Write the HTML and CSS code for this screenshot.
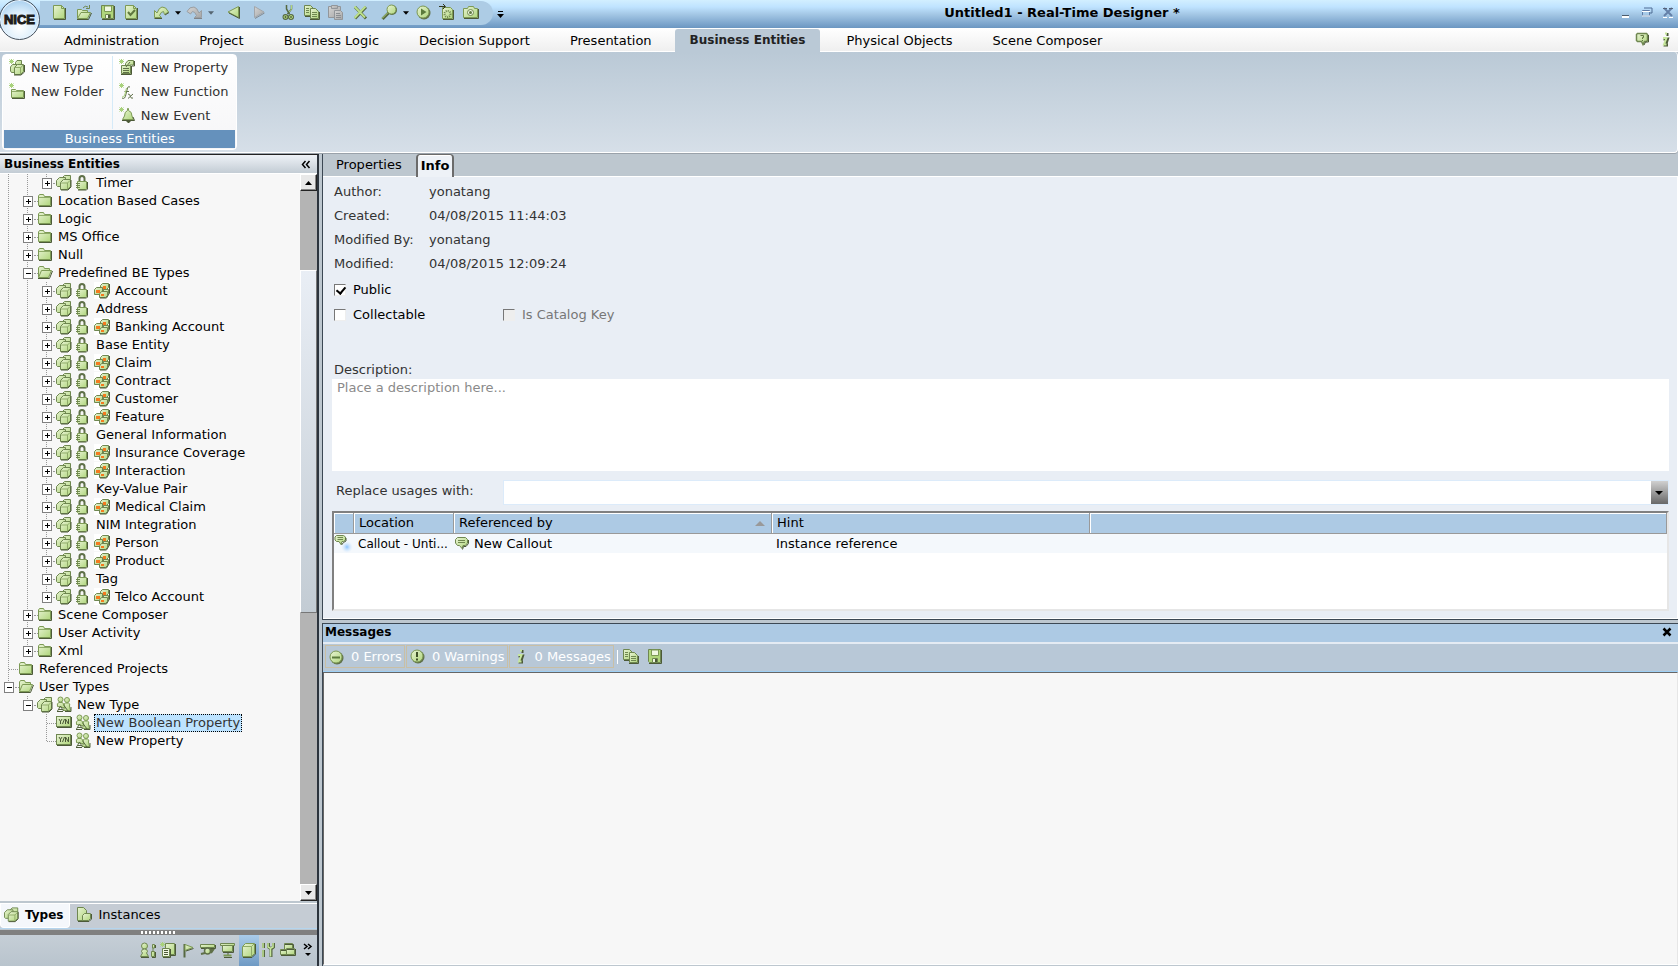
FILE: index.html
```
<!DOCTYPE html>
<html lang="en">
<head>
<meta charset="utf-8">
<title>Untitled1 - Real-Time Designer *</title>
<link rel="stylesheet" href="styles.css">
</head>
<body>
<svg class="defs" width="0" height="0" aria-hidden="true">
  <defs>
    <linearGradient id="gr" x1="0" y1="0" x2="1" y2="1"><stop offset="0" stop-color="#e8f3d4"/><stop offset="1" stop-color="#b0d67c"/></linearGradient>
    <linearGradient id="gy" x1="0" y1="0" x2="1" y2="1"><stop offset="0" stop-color="#d4d4d4"/><stop offset="1" stop-color="#a6a6a6"/></linearGradient>
    <radialGradient id="glow"><stop offset="0" stop-color="#8cc4ff"/><stop offset="1" stop-color="#d8ebff" stop-opacity="0"/></radialGradient>
  </defs>
  <symbol id="i-cubes" viewBox="0 0 19 18"><g fill="url(#gr)" stroke="#6f8750" stroke-linejoin="round"><path d="M5.500 4.500L8.500 1.500H14.500V7.500L11.500 10.500H5.500Z"/><path d="M.5 6.500L3.500 3.500H9.500V10L6.500 12.500H1.500L.5 11.500Z"/><path d="M4.500 8.500L7.500 5.500H14.500V12.500L11.500 15.500H4.500Z"/></g><path d="M5 9H11.500V15M11.500 9L14 6.500" fill="none" stroke="#8fab68"/><path d="M5 16H12L15 13V6" fill="none" stroke="#4c5a38"/></symbol>
  <symbol id="i-lock" viewBox="0 0 19 18"><path d="M4.500 8V4.500Q4.500 2 7 2T9.500 4.500V8" fill="none" stroke="#5f7048" stroke-width="2"/><path d="M2.500 7.500H11.500V14.500L10.500 15.500H3.500L2.500 14.500Z" fill="url(#gr)" stroke="#7d9a55"/><path d="M1 9.500H5M1 11.500H5M1 13.500H5" stroke="#6f8750"/><path d="M3 16H11.500L12.500 15V8" fill="none" stroke="#4c5a38"/></symbol>
  <symbol id="i-cat" viewBox="0 0 19 18"><rect width="16" height="17" fill="#fff"/><g fill="url(#gr)" stroke="#6f8750"><path d="M6.500 3.500L8.500 1.500H14.500V5.500L12.500 7.500H6.500Z"/><path d="M9.500 7.500H14.500V11.500L13 12.500H9.500Z"/><path d="M.5 7.500L2.500 5.500H8.500V10.500L7.500 12.500H.5Z"/><path d="M5.500 12L7.500 9.500H13.500V13.500L11.500 15.500H5.500Z"/></g><path d="M9 4h3v3H9zM2 8h4v3H2zM7 12h3v2H7z" fill="#f47a1e"/><path d="M15.500 2V11L12.500 16H6" fill="none" stroke="#4c5a38"/></symbol>
  <symbol id="i-folder" viewBox="0 0 19 18"><path d="M1.500 13.500V4L2.500 2.500H6.500L7.500 4.500H13.500V13.500Z" fill="url(#gr)" stroke="#7d9a55"/><path d="M2 5.500H13" stroke="#8fab68"/><path d="M2 14.500H14.500V5" fill="none" stroke="#4c5a38"/></symbol>
  <symbol id="i-open" viewBox="0 0 19 18"><path d="M1.500 13V4L2.500 2.500H6.500L7.500 4.500H12.500V7" fill="url(#gr)" stroke="#7d9a55"/><path d="M1.500 13.500L4.500 6.500H14.500L11.500 13.500Z" fill="url(#gr)" stroke="#7d9a55"/><path d="M1 14.500H12.500L15.500 7" fill="none" stroke="#4c5a38"/></symbol>
  <symbol id="i-users" viewBox="0 0 19 18"><g fill="url(#gr)" stroke="#7d9a55"><circle cx="11" cy="4" r="2.500"/><path d="M7.500 14.500L8.500 10Q7.500 7 9.500 7H12.500Q14.500 7.500 13.500 10L14.500 14.500Z"/><circle cx="4.500" cy="3.500" r="2.500"/><path d="M1.500 10.500Q.5 7 3 6.500H6Q8 7 7.500 9L9.500 12Z"/></g><path d="M1.500 15L4.500 10L7.500 15M2.500 13.500H6.500M8 9.500L12 15M15 15.500V11" fill="none" stroke="#566841"/><path d="M1 15.500H7M9 15.500H15" stroke="#4c5a38"/></symbol>
  <symbol id="i-yn" viewBox="0 0 19 18"><rect x=".5" y="2.500" width="14" height="10" fill="url(#gr)" stroke="#6f8750"/><path d="M1 13.500H15.500V3" fill="none" stroke="#4c5a38"/><path d="M3 5L4.500 7.500L6 5M4.500 7V10M8.500 5L6.500 10M9.500 10V5L12.500 10V5" fill="none" stroke="#4c5a38"/></symbol>
  <symbol id="i-spark" viewBox="0 0 18 18"><path d="M2.500 0V5M0 2.500H5M.5 .5L4.500 4.500M4.500 .5L.5 4.500" stroke="#a9d27c"/></symbol>
  <symbol id="i-newtype" viewBox="0 0 18 18"><g fill="url(#gr)" stroke="#6f8750"><path d="M6.500 3.500L8 1.500H12.500V6H6.500Z"/><path d="M1.500 8L3.500 5.500H8V13.500H2.500L1.500 12Z"/><path d="M5.500 8.500L8.500 5.500H14.500V12.500L11.500 15.500H5.500Z"/></g><path d="M6 8.500H11.500V15M11.500 9L14 6" fill="none" stroke="#8fab68"/><path d="M5 16H12L15.500 13V6" fill="none" stroke="#4c5a38"/><use href="#i-spark"/></symbol>
  <symbol id="i-newfolder" viewBox="0 0 18 18"><path d="M2.500 14.500V6.500H6.500L7.500 7.500H14.500V14.500Z" fill="url(#gr)" stroke="#7d9a55"/><path d="M3 8.500H14" stroke="#8fab68"/><path d="M3 15.500H15.500V8" fill="none" stroke="#4c5a38"/><use href="#i-spark"/></symbol>
  <symbol id="i-prop" viewBox="0 0 18 18"><path d="M6.500 4.500L9 1.500H14.500V6H11L6.500 9Z" fill="url(#gr)" stroke="#6f8750"/><path d="M2.500 6.500H11.500V14.500H2.500Z" fill="url(#gr)" stroke="#6f8750"/><path d="M4 9.500H10M4 11.500H10M4 13.500H10M7 8L11 3" stroke="#5f7048"/><path d="M2 15.500H12.500V7M15.500 2V7H13" fill="none" stroke="#4c5a38"/><use href="#i-spark"/></symbol>
  <symbol id="i-func" viewBox="0 0 18 18"><path d="M3 15Q6 17 7 11L8.500 5Q9 3 11 4M5.500 8.500H10M9 11Q11 11 11.500 13.500T14 15M14 11L9 15.500" fill="none" stroke="#5f7048"/><path d="M3 14Q5 15 6 11L7.500 5" fill="none" stroke="#a9cf7b"/><use href="#i-spark"/></symbol>
  <symbol id="i-bell" viewBox="0 0 18 18"><path d="M8.500 1.500H9.500V3.500Q13 4.500 13 9L14.500 12.500H3.500L5.500 9Q5.500 4.500 8.500 3.500Z" fill="url(#gr)" stroke="#7d9a55"/><path d="M3 13.500H15.500L14 10M7.500 14.500H11.500M8.500 15.500H10.500" fill="none" stroke="#4c5a38"/><use href="#i-spark"/></symbol>
  <symbol id="i-doc" viewBox="0 0 18 18"><path d="M1.500 1.500H9.500L12.500 4.500V14.500H1.500Z" fill="url(#gr)" stroke="#7d9a55"/><path d="M9.500 1.500V4.500H12.500" fill="none" stroke="#7d9a55"/><path d="M2 15.500H13.500V4" fill="none" stroke="#4c5a38"/></symbol>
  <symbol id="i-openfile" viewBox="0 0 18 18"><path d="M1.500 14V5.500H5.500L6.500 6.500H11.500V8.500" fill="url(#gr)" stroke="#7d9a55"/><path d="M1.500 14.500L5 8.500H14.500L11.500 14.500Z" fill="url(#gr)" stroke="#7d9a55"/><path d="M1 15.500H12.500L15.500 9" fill="none" stroke="#4c5a38"/><path d="M7 4Q9 1 12 3M13.500 1V4.500H10" fill="none" stroke="#6f8750"/></symbol>
  <symbol id="i-save" viewBox="0 0 18 18"><path d="M1.500 1.500H13.500V14.500H2.500L1.500 13.500Z" fill="#b0d67c" stroke="#6f8750"/><path d="M4.500 2H11.500V7.500H4.500Z" fill="#f0f8e2" stroke="#7d9a55"/><path d="M5.500 10.500H10.500V14.500H5.500Z" fill="#f0f8e2" stroke="#6f8750"/><path d="M8 11h2v3H8z" fill="#4c5a38"/><path d="M2 15.500H14.500V2" fill="none" stroke="#4c5a38"/></symbol>
  <symbol id="i-check" viewBox="0 0 18 18"><use href="#i-doc"/><path d="M4 8L6.500 11L11 6" fill="none" stroke="#5f7840" stroke-width="2"/></symbol>
  <symbol id="i-undo" viewBox="0 0 18 18"><path d="M1.500 6.500V13.500H8.500L6.500 11.500Q8 7.500 10.500 7.500L11.500 10.500L15.500 8Q13 2.500 9 3Q6 3.500 4 9Z" fill="url(#gr)" stroke="#7d9a55" stroke-linejoin="round"/><path d="M1.500 14.500H9M12 11L16 8.500" stroke="#4c5a38"/></symbol>
  <symbol id="i-redo" viewBox="0 0 18 18"><path d="M15.500 6.500V13.500H8.500L10.500 11.500Q9 7.500 6.500 7.500L4.500 10L1 7.500Q3.500 2.500 8 3Q11 3.500 13 9Z" fill="url(#gy)" stroke="#9a9ea2" stroke-linejoin="round"/><path d="M8 14.500H16" stroke="#808488"/></symbol>
  <symbol id="i-back" viewBox="0 0 18 18"><path d="M12.500 2.500V13.500L2 8Z" fill="url(#gr)" stroke="#7d9a55" stroke-linejoin="round"/><path d="M3 9L13.500 14.500V3" fill="none" stroke="#4c5a38"/></symbol>
  <symbol id="i-fwd" viewBox="0 0 18 18"><path d="M4.500 2.500V13.500L14 8Z" fill="url(#gy)" stroke="#a2a6aa" stroke-linejoin="round"/><path d="M5 14.500L14.500 9" stroke="#83898f"/></symbol>
  <symbol id="i-cut" viewBox="0 0 18 18"><path d="M11.500 1V5L7.500 10M6.500 1V5L9.500 10" fill="none" stroke="#566841" stroke-width="1.500"/><g fill="none" stroke="#566841" stroke-width="3"><circle cx="5.500" cy="13" r="1.500"/><circle cx="11" cy="13" r="1.500"/></g><g fill="none" stroke="#b0d67c"><circle cx="5.500" cy="13" r="1.500"/><circle cx="11" cy="13" r="1.500"/><path d="M11.500 1V5L9 8"/></g></symbol>
  <symbol id="i-copy" viewBox="0 0 18 18"><g fill="url(#gr)" stroke="#6f8750"><path d="M.5 1.500H6.500L9.500 4.500V11.500H.5Z"/><path d="M6.500 4.500H11.500L14.500 7.500V14.500H6.500Z"/></g><path d="M2 4.500H5M2 6.500H5M2 8.500H5M8 8.500H13M8 10.500H13M8 12.500H13" stroke="#6f8750"/><path d="M6 15.500H15.500V8M1 12.500H6" fill="none" stroke="#4c5a38"/></symbol>
  <symbol id="i-paste" viewBox="0 0 18 18"><g fill="url(#gy)" stroke="#92969a"><path d="M.5 2.500H12.500V13.500H.5Z"/><path d="M3.500 1.500H9.500V4.500H3.500Z"/><path d="M6.500 6.500H12.500L14.500 8.500V15.500H6.500Z"/></g><path d="M8 9.500H12M8 11.500H13M8 13.500H13" stroke="#8a8e92"/></symbol>
  <symbol id="i-del" viewBox="0 0 18 18"><path d="M3 3L14 14.500M14 3L3 14.500" stroke="#566841" stroke-width="3"/><path d="M2.500 2.500L13 13.500M13.500 2.500L2.500 14" stroke="#bbdf8a" stroke-width="2"/></symbol>
  <symbol id="i-find" viewBox="0 0 18 18"><path d="M1.500 15L8 8.500" stroke="#566841" stroke-width="3"/><path d="M1 14.500L7 8.500" stroke="#b0d67c"/><circle cx="11" cy="6" r="5" fill="#566841"/><circle cx="10.500" cy="5.500" r="4.500" fill="url(#gr)" stroke="#7d9a55"/></symbol>
  <symbol id="i-run" viewBox="0 0 18 18"><circle cx="9" cy="9" r="6.500" fill="#5f7048"/><circle cx="8" cy="8" r="6" fill="url(#gr)" stroke="#7d9a55"/><path d="M6 4.500L11.500 8L6 11.500Z" fill="#5b7a3c"/></symbol>
  <symbol id="i-gear" viewBox="0 0 18 18"><path d="M3.500 3.500H11.500L13.500 5.500V14.500H3.500Z" fill="url(#gr)" stroke="#7d9a55"/><path d="M4 15.500H14.500V6" fill="none" stroke="#4c5a38"/><circle cx="8.500" cy="10" r="3" fill="none" stroke="#6f8750" stroke-width="2" stroke-dasharray="1 1"/><path d="M0 2.500H6M4 0L6.500 2.500L4 5" fill="none" stroke="#303820"/></symbol>
  <symbol id="i-cam" viewBox="0 0 18 18"><path d="M.5 4.500H4.500L5.500 2.500H10.500L11.500 4.500H14.500V13.500H.5Z" fill="url(#gr)" stroke="#7d9a55"/><circle cx="7.500" cy="8.500" r="3" fill="#f0f8e2" stroke="#6f8750"/><circle cx="7.500" cy="8.500" r="1.500" fill="#5f7840"/><path d="M1 14.500H15.500V5" fill="none" stroke="#4c5a38"/></symbol>
  <symbol id="i-help" viewBox="0 0 18 18"><path d="M3.500 2.500H12.500L13.500 3.500V9.500L12.500 10.500H10.500L9 13.500L7.500 10.500H3.500L2.500 9.500V3.500Z" fill="url(#gr)" stroke="#6f8750" stroke-width="1.500"/><path d="M14.500 4V11H11.500L10 14" fill="none" stroke="#4c5a38"/><path d="M6.500 4.500H9.500V6.500H8.500V8M8.500 9V10" fill="none" stroke="#5f7840"/></symbol>
  <symbol id="i-info" viewBox="0 0 18 18"><path d="M9.500 3.500H11.500M6.500 8H10.500L8.500 14H11" fill="none" stroke="#4c5a38" stroke-width="3"/><path d="M8 2.500H10M6 7H9.500L7 13.500H9.500" fill="none" stroke="#c6e69c" stroke-width="2"/></symbol>
  <symbol id="i-err" viewBox="0 0 18 18"><circle cx="9" cy="10" r="6.500" fill="#5f7048"/><circle cx="8" cy="9" r="6" fill="url(#gr)" stroke="#7d9a55"/><path d="M4 9.500H12" stroke="#5b7a3c" stroke-width="2"/></symbol>
  <symbol id="i-warn" viewBox="0 0 18 18"><circle cx="9" cy="9" r="6.500" fill="#5f7048"/><circle cx="8" cy="8" r="6" fill="url(#gr)" stroke="#7d9a55"/><path d="M8 4V9M8 10.500V12.500" stroke="#3f5028" stroke-width="2"/></symbol>
  <symbol id="i-callout" viewBox="0 0 18 18"><path d="M3.500 2.500H11.500L13.500 4.500V8L11.500 10.500H9L8 13.500L5.500 10.500H3.500L1.500 8V4.500Z" fill="url(#gr)" stroke="#6f8750"/><path d="M14.500 5V8.500L12 11.500H9.500L8.500 14.500" fill="none" stroke="#4c5a38"/><path d="M4 5.500H11M4 7.500H11" stroke="#6f8750"/></symbol>
  <symbol id="i-callout2" viewBox="0 0 19 19"><circle cx="13" cy="13" r="6" fill="url(#glow)"/><path d="M2.500 1.500H9.500L11.500 3V6L9.500 7.500H8L7 10.500L5 7.500H2.500L1 6V3Z" fill="url(#gr)" stroke="#6f8750"/><path d="M3.500 3.500H9M3.500 5.500H9" stroke="#6f8750"/><path d="M12 4V7L9.500 8.500L7.500 11" fill="none" stroke="#4c5a38"/></symbol>
  <symbol id="i-inst" viewBox="0 0 18 18"><path d="M1.500 1.500H7.500L10.500 4.500V14.500H1.500Z" fill="url(#gr)" stroke="#6f8750"/><path d="M6.500 9.500L8.500 7.500H14.500V12.500L12.500 14.500H6.500Z" fill="url(#gr)" stroke="#6f8750"/><path d="M2 15.500H13L15.500 13V8" fill="none" stroke="#4c5a38"/></symbol>
  <symbol id="i-n1" viewBox="0 0 18 18"><g fill="url(#gr)" stroke="#6f8750"><circle cx="4.500" cy="4" r="3"/><path d="M1.500 9.500Q1.500 7 4.500 7T7.500 9.500L6.500 11L8.500 14.500H.5L2.500 11Z"/><path d="M12.500 2.500H14.500V6H12.500ZM11.500 9.500H14.500V14.500H11.500ZM13 6V9"/></g><path d="M1 15.500H9M12 15.500H15.500V10M15.500 3V6" fill="none" stroke="#4c5a38"/></symbol>
  <symbol id="i-n2" viewBox="0 0 18 18"><path d="M5.500 1.500H14.500V12.500H5.500Z" fill="url(#gr)" stroke="#6f8750"/><path d="M11 13.500H15.500V2" fill="none" stroke="#4c5a38"/><path d="M2.500 6.500H9.500V14.500H2.500Z" fill="#f0f8e2" stroke="#6f8750"/><path d="M3 15.500H10.500V7M4 8.500H8M4 10.500H8M4 12.500H8" fill="none" stroke="#4c5a38"/><use href="#i-spark"/></symbol>
  <symbol id="i-n3" viewBox="0 0 18 18"><path d="M4.500 2V15.500" stroke="#566841" stroke-width="2"/><path d="M5 2.500L13 5.500L5 8.500Z" fill="url(#gr)" stroke="#7d9a55"/><path d="M6 9L13.500 6.500" stroke="#4c5a38"/></symbol>
  <symbol id="i-n4" viewBox="0 0 18 18"><path d="M.5 2.500H14.500V5.500H.5Z" fill="url(#gr)" stroke="#6f8750"/><path d="M1 6.500H15.500V3" fill="none" stroke="#4c5a38"/><path d="M10 8H13L11 11M5 11L1 12" fill="none" stroke="#5f7048" stroke-width="2"/><circle cx="7.500" cy="9" r="3" fill="url(#gr)" stroke="#5f7048" stroke-width="1.500"/></symbol>
  <symbol id="i-n5" viewBox="0 0 18 18"><path d="M.5 1.500H14.500V3.500H.5Z" fill="url(#gr)" stroke="#6f8750"/><path d="M2.500 3.500H12.500V9.500H2.500Z" fill="url(#gr)" stroke="#6f8750"/><path d="M3 10.500H13.500V4M8 11V13M4 15.500H12" fill="none" stroke="#4c5a38"/><path d="M3.500 13.500H11.500" stroke="#7d9a55" stroke-width="2"/></symbol>
  <symbol id="i-n6" viewBox="0 0 18 18"><path d="M2.500 4.500L5.500 1.500H14.500V11.500L11.500 14.500H2.500Z" fill="url(#gr)" stroke="#7d9a55"/><path d="M3 4.500H11.500V14M11.500 4.500L14 2" fill="none" stroke="#8fab68"/><path d="M3 15.500H12L15.500 12V2" fill="none" stroke="#4c5a38"/></symbol>
  <symbol id="i-n7" viewBox="0 0 18 18"><path d="M3.500 1V6M3.500 8V15" stroke="#566841" stroke-width="3"/><path d="M3 1V6M3 8V15" stroke="#c6e69c" stroke-width="1.500"/><path d="M8.500 1V5L11 7L13.500 5V1M11 6V15" fill="none" stroke="#566841" stroke-width="3"/><path d="M8 1V5L10.500 6.500L13 5V1M10.500 6V14.500" fill="none" stroke="#c6e69c" stroke-width="1.500"/></symbol>
  <symbol id="i-n8" viewBox="0 0 18 18"><g fill="url(#gr)" stroke="#6f8750"><path d="M4.500 1.500H12.500V7.500H4.500Z"/><path d="M.5 7.500H8.500V12.500H.5Z"/><path d="M6.500 6.500H14.500V12.500H6.500Z"/></g><path d="M5 2.500H13.500V6M1 13.500H15.500V7M7 7.500H14M1 8.500H6" fill="none" stroke="#4c5a38"/></symbol>
  <symbol id="i-more" viewBox="0 0 10 18"><path d="M1 2L4 4.500L1 7M5 2L8 4.500L5 7" fill="none" stroke="#000" stroke-width="1.500"/><path d="M2 11H8L5 14Z"/></symbol>
  <symbol id="i-down" viewBox="0 0 7 4"><path d="M0 0H7L3.500 4Z"/></symbol>
</svg>

<header class="top">
  <div class="titlebar">
    <div class="logo" aria-hidden="true"><span>NICE</span></div>
    <div class="quick" role="toolbar" aria-label="Quick access">
      <button aria-label="New"><svg><use href="#i-doc"/></svg></button>
      <button aria-label="Open"><svg><use href="#i-openfile"/></svg></button>
      <button aria-label="Save"><svg><use href="#i-save"/></svg></button>
      <button aria-label="Validate"><svg><use href="#i-check"/></svg></button>
      <button class="drop" aria-label="Undo"><svg><use href="#i-undo"/></svg><svg class="caret"><use href="#i-down"/></svg></button>
      <button class="drop off" aria-label="Redo"><svg><use href="#i-redo"/></svg><svg class="caret"><use href="#i-down"/></svg></button>
      <button class="nav" aria-label="Back"><svg><use href="#i-back"/></svg></button>
      <button aria-label="Forward"><svg><use href="#i-fwd"/></svg></button>
      <button class="nav" aria-label="Cut"><svg><use href="#i-cut"/></svg></button>
      <button aria-label="Copy"><svg><use href="#i-copy"/></svg></button>
      <button aria-label="Paste"><svg><use href="#i-paste"/></svg></button>
      <button aria-label="Delete"><svg><use href="#i-del"/></svg></button>
      <button class="drop" aria-label="Find"><svg><use href="#i-find"/></svg><svg class="caret"><use href="#i-down"/></svg></button>
      <button aria-label="Run"><svg><use href="#i-run"/></svg></button>
      <button aria-label="Generate"><svg><use href="#i-gear"/></svg></button>
      <button aria-label="Capture"><svg><use href="#i-cam"/></svg></button>
    </div>
    <button class="customize" aria-label="Customize"><svg viewBox="0 0 7 8"><path d="M1 1.500H6" stroke="#000"/><path d="M0 4H7L3.500 8Z"/></svg></button>
    <h1>Untitled1 - Real-Time Designer *</h1>
    <div class="win">
      <button aria-label="Minimize"><svg viewBox="0 0 12 12"><path d="M2 8.500H9" stroke="#4d5c6c"/><path d="M2 10H9" stroke="#fff" stroke-width="2"/></svg></button>
      <button aria-label="Restore"><svg viewBox="0 0 12 12"><path d="M3 1H11V6H9" fill="none" stroke="#4f6c94"/><path d="M1.500 3.500H8.500V9H1.500Z" fill="none" stroke="#5f7ba5"/><path d="M1 4.500H9M1 9H9" stroke="#fff"/></svg></button>
      <button aria-label="Close"><svg viewBox="0 0 12 12"><path d="M2 1L10 9M10 1L2 9" stroke="#6480a8" stroke-width="2"/><path d="M1 1.500H5M7 1.500H11" stroke="#56647a"/><path d="M1 10.500H5M7 10.500H11" stroke="#fff"/></svg></button>
    </div>
  </div>
  <nav class="menu">
    <a href="#">Administration</a><a href="#">Project</a><a href="#">Business Logic</a><a href="#">Decision Support</a><a href="#">Presentation</a><a href="#" class="on">Business Entities</a><a href="#">Physical Objects</a><a href="#">Scene Composer</a>
    <div class="menu-right">
      <button aria-label="Help"><svg><use href="#i-help"/></svg></button>
      <button aria-label="About"><svg><use href="#i-info"/></svg></button>
    </div>
  </nav>
  <div class="ribbon">
    <section class="group">
      <div class="group-body">
        <div class="col">
          <button><svg><use href="#i-newtype"/></svg>New Type</button>
          <button><svg><use href="#i-newfolder"/></svg>New Folder</button>
        </div>
        <div class="col">
          <button><svg><use href="#i-prop"/></svg>New Property</button>
          <button><svg><use href="#i-func"/></svg>New Function</button>
          <button><svg><use href="#i-bell"/></svg>New Event</button>
        </div>
      </div>
      <h2>Business Entities</h2>
    </section>
  </div>
</header>

<main class="work">
  <aside class="side">
    <div class="side-head"><h2>Business Entities</h2><button aria-label="Collapse"><svg viewBox="0 0 10 9"><path d="M4.500 1L1.500 4.500L4.500 8M8.500 1L5.500 4.500L8.500 8" fill="none" stroke="#000" stroke-width="1.500"/></svg></button></div>
    <div class="tree-wrap">
      <ul class="tree">
        <li><i class="v"></i><i class="v"></i><i class="t last"></i><span class="n"><svg><use href="#i-cubes"/></svg><svg><use href="#i-lock"/></svg><b>Timer</b></span></li>
        <li><i class="v"></i><i class="t"></i><span class="n"><svg><use href="#i-folder"/></svg><b>Location Based Cases</b></span></li>
        <li><i class="v"></i><i class="t"></i><span class="n"><svg><use href="#i-folder"/></svg><b>Logic</b></span></li>
        <li><i class="v"></i><i class="t"></i><span class="n"><svg><use href="#i-folder"/></svg><b>MS Office</b></span></li>
        <li><i class="v"></i><i class="t"></i><span class="n"><svg><use href="#i-folder"/></svg><b>Null</b></span></li>
        <li><i class="v"></i><i class="t minus"></i><span class="n"><svg><use href="#i-open"/></svg><b>Predefined BE Types</b></span></li>
        <li><i class="v"></i><i class="v"></i><i class="t"></i><span class="n"><svg><use href="#i-cubes"/></svg><svg><use href="#i-lock"/></svg><svg><use href="#i-cat"/></svg><b>Account</b></span></li>
        <li><i class="v"></i><i class="v"></i><i class="t"></i><span class="n"><svg><use href="#i-cubes"/></svg><svg><use href="#i-lock"/></svg><b>Address</b></span></li>
        <li><i class="v"></i><i class="v"></i><i class="t"></i><span class="n"><svg><use href="#i-cubes"/></svg><svg><use href="#i-lock"/></svg><svg><use href="#i-cat"/></svg><b>Banking Account</b></span></li>
        <li><i class="v"></i><i class="v"></i><i class="t"></i><span class="n"><svg><use href="#i-cubes"/></svg><svg><use href="#i-lock"/></svg><b>Base Entity</b></span></li>
        <li><i class="v"></i><i class="v"></i><i class="t"></i><span class="n"><svg><use href="#i-cubes"/></svg><svg><use href="#i-lock"/></svg><svg><use href="#i-cat"/></svg><b>Claim</b></span></li>
        <li><i class="v"></i><i class="v"></i><i class="t"></i><span class="n"><svg><use href="#i-cubes"/></svg><svg><use href="#i-lock"/></svg><svg><use href="#i-cat"/></svg><b>Contract</b></span></li>
        <li><i class="v"></i><i class="v"></i><i class="t"></i><span class="n"><svg><use href="#i-cubes"/></svg><svg><use href="#i-lock"/></svg><svg><use href="#i-cat"/></svg><b>Customer</b></span></li>
        <li><i class="v"></i><i class="v"></i><i class="t"></i><span class="n"><svg><use href="#i-cubes"/></svg><svg><use href="#i-lock"/></svg><svg><use href="#i-cat"/></svg><b>Feature</b></span></li>
        <li><i class="v"></i><i class="v"></i><i class="t"></i><span class="n"><svg><use href="#i-cubes"/></svg><svg><use href="#i-lock"/></svg><b>General Information</b></span></li>
        <li><i class="v"></i><i class="v"></i><i class="t"></i><span class="n"><svg><use href="#i-cubes"/></svg><svg><use href="#i-lock"/></svg><svg><use href="#i-cat"/></svg><b>Insurance Coverage</b></span></li>
        <li><i class="v"></i><i class="v"></i><i class="t"></i><span class="n"><svg><use href="#i-cubes"/></svg><svg><use href="#i-lock"/></svg><svg><use href="#i-cat"/></svg><b>Interaction</b></span></li>
        <li><i class="v"></i><i class="v"></i><i class="t"></i><span class="n"><svg><use href="#i-cubes"/></svg><svg><use href="#i-lock"/></svg><b>Key-Value Pair</b></span></li>
        <li><i class="v"></i><i class="v"></i><i class="t"></i><span class="n"><svg><use href="#i-cubes"/></svg><svg><use href="#i-lock"/></svg><svg><use href="#i-cat"/></svg><b>Medical Claim</b></span></li>
        <li><i class="v"></i><i class="v"></i><i class="t"></i><span class="n"><svg><use href="#i-cubes"/></svg><svg><use href="#i-lock"/></svg><b>NIM Integration</b></span></li>
        <li><i class="v"></i><i class="v"></i><i class="t"></i><span class="n"><svg><use href="#i-cubes"/></svg><svg><use href="#i-lock"/></svg><svg><use href="#i-cat"/></svg><b>Person</b></span></li>
        <li><i class="v"></i><i class="v"></i><i class="t"></i><span class="n"><svg><use href="#i-cubes"/></svg><svg><use href="#i-lock"/></svg><svg><use href="#i-cat"/></svg><b>Product</b></span></li>
        <li><i class="v"></i><i class="v"></i><i class="t"></i><span class="n"><svg><use href="#i-cubes"/></svg><svg><use href="#i-lock"/></svg><b>Tag</b></span></li>
        <li><i class="v"></i><i class="v"></i><i class="t last"></i><span class="n"><svg><use href="#i-cubes"/></svg><svg><use href="#i-lock"/></svg><svg><use href="#i-cat"/></svg><b>Telco Account</b></span></li>
        <li><i class="v"></i><i class="t"></i><span class="n"><svg><use href="#i-folder"/></svg><b>Scene Composer</b></span></li>
        <li><i class="v"></i><i class="t"></i><span class="n"><svg><use href="#i-folder"/></svg><b>User Activity</b></span></li>
        <li><i class="v"></i><i class="t last"></i><span class="n"><svg><use href="#i-folder"/></svg><b>Xml</b></span></li>
        <li><i class="v h"></i><span class="n"><svg><use href="#i-folder"/></svg><b>Referenced Projects</b></span></li>
        <li><i class="t minus last"></i><span class="n"><svg><use href="#i-open"/></svg><b>User Types</b></span></li>
        <li><i></i><i class="t minus last"></i><span class="n"><svg><use href="#i-cubes"/></svg><svg><use href="#i-users"/></svg><b>New Type</b></span></li>
        <li><i></i><i></i><i class="v h"></i><span class="n"><svg><use href="#i-yn"/></svg><svg><use href="#i-users"/></svg><b class="sel">New Boolean Property</b></span></li>
        <li><i></i><i></i><i class="v h last"></i><span class="n"><svg><use href="#i-yn"/></svg><svg><use href="#i-users"/></svg><b>New Property</b></span></li>
      </ul>
      <div class="scroll">
        <button aria-label="Scroll up"><svg viewBox="0 0 7 4"><path d="M0 4H7L3.500 0Z"/></svg></button>
        <div class="before"></div>
        <div class="thumb"></div>
        <div class="after"></div>
        <button aria-label="Scroll down"><svg><use href="#i-down"/></svg></button>
      </div>
    </div>
    <div class="side-tabs">
      <button class="on"><svg><use href="#i-cubes"/></svg>Types</button>
      <button><svg><use href="#i-inst"/></svg>Instances</button>
    </div>
    <div class="grip"><span></span></div>
    <div class="side-nav">
      <button aria-label="Users"><svg><use href="#i-n1"/></svg></button>
      <button aria-label="Forms"><svg><use href="#i-n2"/></svg></button>
      <button aria-label="Flags"><svg><use href="#i-n3"/></svg></button>
      <button aria-label="Decisions"><svg><use href="#i-n4"/></svg></button>
      <button aria-label="Presentation"><svg><use href="#i-n5"/></svg></button>
      <button class="on" aria-label="Entities"><svg><use href="#i-n6"/></svg></button>
      <button aria-label="Tools"><svg><use href="#i-n7"/></svg></button>
      <button aria-label="Screens"><svg><use href="#i-n8"/></svg></button>
      <button class="more" aria-label="More"><svg><use href="#i-more"/></svg></button>
    </div>
  </aside>

  <div class="content">
    <section class="editor">
      <div class="tabs"><button>Properties</button><button class="on">Info</button></div>
      <div class="form">
        <dl>
          <dt>Author:</dt><dd>yonatang</dd>
          <dt>Created:</dt><dd>04/08/2015 11:44:03</dd>
          <dt>Modified By:</dt><dd>yonatang</dd>
          <dt>Modified:</dt><dd>04/08/2015 12:09:24</dd>
        </dl>
        <div class="checks">
          <label><input type="checkbox" checked>Public</label>
          <span></span>
          <label><input type="checkbox">Collectable</label>
          <label class="off"><input type="checkbox" disabled>Is Catalog Key</label>
        </div>
        <label class="desc" for="desc">Description:</label>
        <textarea id="desc" placeholder="Place a description here..."></textarea>
        <div class="replace">
          <label for="rep">Replace usages with:</label>
          <div class="combo"><select id="rep"><option></option></select></div>
        </div>
        <div class="grid">
          <table>
            <colgroup><col class="c0"><col class="c1"><col class="c2"><col class="c2"><col></colgroup>
            <thead><tr><th></th><th>Location</th><th class="sort">Referenced by</th><th>Hint</th><th></th></tr></thead>
            <tbody><tr><td><svg><use href="#i-callout2"/></svg></td><td class="loc">Callout - Unti...</td><td class="ref"><svg><use href="#i-callout"/></svg>New Callout</td><td>Instance reference</td><td></td></tr></tbody>
          </table>
        </div>
      </div>
    </section>
    <section class="messages">
      <div class="msg-head"><h2>Messages</h2><button aria-label="Close messages"><svg viewBox="0 0 10 10"><path d="M1.500 1.500L8.500 8.500M8.500 1.500L1.500 8.500" stroke="#000" stroke-width="2.500"/></svg></button></div>
      <div class="msg-bar">
        <button class="flt"><svg><use href="#i-err"/></svg>0 Errors</button>
        <button class="flt"><svg><use href="#i-warn"/></svg>0 Warnings</button>
        <button class="flt"><svg><use href="#i-info"/></svg>0 Messages</button>
        <span class="sep"></span>
        <button aria-label="Copy messages"><svg><use href="#i-copy"/></svg></button>
        <button aria-label="Save messages"><svg><use href="#i-save"/></svg></button>
      </div>
      <div class="msg-list"></div>
    </section>
  </div>
</main>
</body>
</html>
```
FILE: styles.css
```
* { box-sizing: border-box; }
body {
  margin: 0;
  height: 100vh;
  display: flex;
  flex-direction: column;
  overflow: hidden;
  font: 13px/18px "DejaVu Sans", Verdana, sans-serif;
  color: #000;
  background: #bdc7cf;
}
.defs { position: absolute; }
h1, h2, ul, dl, dd { margin: 0; padding: 0; font: inherit; }
h1, h2 { font-weight: bold; }
button { font: inherit; color: inherit; border: 0; padding: 0; background: none; display: flex; align-items: center; }
svg { display: block; flex: none; width: 18px; height: 18px; }
ul { list-style: none; }
b { font-weight: normal; }

/* title bar */
.titlebar {
  position: relative;
  display: flex;
  align-items: center;
  height: 28px;
  padding-left: 40px;
  background: linear-gradient(#d2efff, #bfe3ff 25%, #a5c8e6 50%, #6b96c1);
}
.logo {
  position: absolute;
  left: -1px;
  top: -1px;
  z-index: 2;
  width: 41px;
  height: 41px;
  border: 1px solid #44505c;
  border-radius: 50%;
  display: flex;
  align-items: center;
  justify-content: center;
  background: radial-gradient(circle at 50% 70%, #fff, #dceefb 45%, #8fc0e8);
  box-shadow: inset 0 0 0 1px #e8f4ff;
}
.logo span { font: bold 13px "Liberation Sans", sans-serif; color: #1c1c1c; -webkit-text-stroke: 1px #1c1c1c; }
.quick {
  display: flex;
  align-items: center;
  gap: 6px;
  height: 24px;
  padding: 0 12px;
  margin-bottom: 2px;
  border-radius: 0 12px 12px 0;
  background: #adcce5;
}
.quick .drop { gap: 4px; margin-left: 5px; }
.quick .off { margin-left: -1px; }
.quick .caret { width: 6px; height: 4px; }
.quick .off .caret { opacity: .5; }
.quick .nav { margin-left: 6px; }
.customize { margin-left: 4px; }
.customize svg { width: 7px; height: 8px; }
.titlebar h1 { flex: 1; text-align: center; font-size: 13px; line-height: 24px; padding-bottom: 3px; }
.win { display: flex; gap: 9px; padding-right: 4px; margin-bottom: 2px; }
.win svg { width: 12px; height: 12px; }

/* menu */
.menu {
  display: flex;
  align-items: stretch;
  height: 24px;
  padding: 1px 3px 0 44px;
  background: linear-gradient(#fff, #efefef);
  border-bottom: 1px solid #fff;
}
.menu a { padding: 0 20px; line-height: 23px; color: #000; text-decoration: none; }
.menu a.on { margin: 0 6px 0 3px; padding: 0 15px; height: 24px; font-size: 12px; font-weight: bold; color: #222; border-radius: 3px 3px 0 0; background: #bac9d6; }
.menu-right { margin-left: auto; display: flex; align-items: center; gap: 5px; }

/* ribbon */
.ribbon {
  height: 101px;
  padding: 2px;
  border: solid #fff;
  border-width: 0 1px 1px 0;
  border-radius: 0 4px 4px 0;
  box-shadow: 0 1px 0 #9aa2aa;
  background: linear-gradient(#bac9d6, #d6dfe8);
}
.group {
  display: inline-flex;
  flex-direction: column;
  padding: 0 1px 1px;
  border-radius: 4px;
  border: 1px solid #fff;
  background: linear-gradient(#fff, #f5f5f7);
}
.group-body { display: flex; padding: 1px 7px 1px 5px; height: 75px; }
.col { display: flex; flex-direction: column; color: #333; }
.col + .col { margin-left: 8px; padding-left: 6px; border-left: 1px solid #d5eaf8; }
.col button { flex: none; height: 24px; gap: 4px; white-space: nowrap; }
.group h2 { font-weight: normal; text-align: center; color: #fff; background: #6591bc; }

/* workspace */
.work { flex: 1; min-height: 0; display: flex; gap: 3px; padding-top: 1px; }
.side {
  width: 319px;
  flex: none;
  display: flex;
  flex-direction: column;
  border-top: 1px solid #222;
  border-right: 2px solid #2c343d;
}
.side-head { display: flex; align-items: center; justify-content: space-between; height: 19px; padding: 0 6px 0 4px; background: linear-gradient(#eef2f7, #c3ccd4); border-bottom: 1px solid #fff; }
.side-head h2, .msg-head h2 { font-size: 12px; }
.side-head svg { width: 10px; height: 9px; }
.tree-wrap { flex: 1; min-height: 0; display: flex; background: #f7f7f7; overflow: hidden; }
.tree { flex: 1; overflow: hidden; }
.tree li { display: flex; height: 18px; }
.tree i { flex: none; width: 19px; height: 18px; background-repeat: no-repeat; display: flex; align-items: center; }
.tree .v, .tree .t { background-image: repeating-linear-gradient(#999 0 1px, transparent 1px 2px); background-size: 1px 100%; background-position: 8px 0; }
.tree .last { background-size: 1px 50%; }
.tree .t::before {
  content: "";
  width: 9px;
  height: 9px;
  margin-left: 4px;
  border: 1px solid #808080;
  background: linear-gradient(#000, #000) center / 5px 1px no-repeat, linear-gradient(#000, #000) center / 1px 5px no-repeat, #fff;
}
.tree .minus::before { background: linear-gradient(#000, #000) center / 5px 1px no-repeat, #fff; }
.tree .t::after { content: ""; width: 4px; margin-left: 1px; border-top: 1px dotted #999; }
.tree .h::after { content: ""; width: 9px; margin-left: 9px; border-top: 1px dotted #999; }
.n { display: flex; margin-left: -1px; white-space: nowrap; }
.n svg { width: 19px; }
.n b { padding: 0 1px; border: 1px solid transparent; line-height: 15px; }
.n b.sel { color: #333; background: #bde3ff; border: 1px dotted #000; }

.scroll { width: 17px; flex: none; display: flex; flex-direction: column; background: #b4b4b4; }
.scroll button { flex: none; height: 17px; justify-content: center; border: 1px solid; border-color: #fff #222 #222 #fff; box-shadow: inset -1px -1px #888; background: #e8e8e8; }
.scroll svg { width: 7px; height: 4px; }
.scroll .before { flex: 79; }
.scroll .thumb { flex: 343; border: 1px solid; border-color: #fff #777 #777 #fff; background: linear-gradient(#e9eef5, #c3ccd4); }
.scroll .after { flex: 272; }

.side-tabs { display: flex; height: 26px; margin-top: 2px; background: #c5ccd4; border-top: 1px solid #fff; border-bottom: 1px solid #b5d5ee; }
.side-tabs button { gap: 4px; padding: 0 12px 2px 6px; }
.side-tabs .on { gap: 3px; padding: 0 6px 2px 3px; font-size: 12px; font-weight: bold; background: #f4f7fb; border: 1px solid #fff; border-top: 0; border-radius: 0 0 4px 4px; }
.grip { height: 5px; margin-top: 1px; display: flex; justify-content: center; align-items: center; background: #808080; }
.grip span { width: 35px; height: 3px; background: repeating-linear-gradient(90deg, #fff 0 2px, #808080 2px 4px); }
.side-nav { display: flex; justify-content: flex-end; height: 31px; background: linear-gradient(#c5ced6, #b9c4cd); }
.side-nav button { width: 20px; justify-content: center; }
.side-nav .on { background: linear-gradient(#a9cbe9, #6f9ac4); }
.side-nav .more { width: 18px; }
.side-nav .more svg { width: 10px; }

.content { flex: 1; min-width: 0; display: flex; flex-direction: column; gap: 3px; }
.editor, .messages { border-left: 1px solid #3c4854; }
.editor { border-bottom: 1px solid #3c4854; }
.tabs { display: flex; height: 23px; padding-left: 12px; border-bottom: 1px solid #fff; }
.tabs button { padding: 0 14px 0 1px; }
.tabs .on { font-size: 13px; font-weight: bold; height: 23px; padding: 0 3px; border: 2px solid #6b6b6b; border-width: 1px 2px 0; border-radius: 4px 4px 0 0; background: #eef2f7; box-shadow: inset 0 1px #fff; }
.form { padding: 3px 8px 7px 9px; background: #e9eef5; border-bottom: 1px solid #fff; border-right: 1px solid #fff; }
.form dl { display: grid; grid-template-columns: 95px 1fr; line-height: 24px; padding-left: 2px; color: #333; }
.checks { display: grid; grid-template-columns: 169px 1fr; line-height: 25px; padding-left: 2px; margin-top: 1px; }
.checks label { display: flex; align-items: center; gap: 7px; }
.checks .off { color: #777; }
.checks input {
  appearance: none;
  flex: none;
  width: 12px;
  height: 12px;
  margin: 0;
  border: 1px solid;
  border-color: #777 #eee #eee #777;
  background: #fff;
}
.checks input:disabled { background: #eee; }
.checks input:checked::before { content: ""; display: block; width: 4px; height: 7px; margin: 0 0 0 3px; border: solid #000; border-width: 0 2px 2px 0; rotate: 40deg; }
.desc { display: block; margin-top: 34px; padding-left: 2px; color: #333; }
textarea { display: block; width: 100%; height: 92px; padding: 0 5px; border: 0; resize: none; font: inherit; background: #fff; }
textarea::placeholder { color: #8a8a8a; opacity: 1; }
.replace { display: flex; margin-top: 9px; padding-left: 4px; color: #333; }
.replace label { width: 167px; line-height: 21px; }
.combo { position: relative; flex: 1; }
.combo select { display: block; width: 100%; height: 25px; appearance: none; border: 1px solid #dcebfa; border-radius: 0; background: linear-gradient(#d0d0d0, #686868) right / 17px 100% no-repeat #fff; }
.combo::after { content: ""; position: absolute; right: 6px; top: 11px; border: 4px solid transparent; border-top-color: #000; border-bottom: 0; }
.grid { height: 100px; margin-top: 6px; border: 2px solid; border-color: #808080 #e6e6e6 #e6e6e6 #808080; background: #fff; }
table { width: 100%; table-layout: fixed; border-collapse: separate; border-spacing: 0; }
.c0 { width: 20px; }
.c1 { width: 100px; }
.c2 { width: 318px; }
th { height: 21px; padding: 0 5px; font-weight: normal; text-align: left; background: #adcae4; border: 1px solid #999; border-width: 0 1px 1px 0; box-shadow: inset 1px 1px #fff; }
th.sort::after { content: ""; float: right; margin: 7px 1px 0 0; border: 5px solid transparent; border-bottom-color: #999; border-top: 0; }
td { height: 19px; padding: 0 4px; white-space: nowrap; background: #f4f8fc; }
td:first-child { padding: 0; }
td:first-child svg { width: 19px; height: 19px; }
td.loc { font-size: 12px; padding-right: 0; }
td.ref { padding-left: 0; }
.ref svg { float: left; margin-right: 2px; }

.messages { flex: 1; display: flex; flex-direction: column; border-top: 1px solid #3c4854; }
.msg-head { display: flex; justify-content: space-between; align-items: center; height: 18px; padding: 0 6px 2px 2px; background: #adcae4; }
.msg-head svg { width: 10px; height: 10px; }
.msg-bar { display: flex; align-items: center; height: 30px; padding: 0 2px 2px; border-top: 2px solid #e4ebf3; border-bottom: 1px solid #9fd0f5; background: #b8c8d7; color: #fff; }
.msg-bar .flt { height: 23px; gap: 5px; padding: 0 2px; margin-right: 1px; border: 1px solid #c9bfa5; }
.msg-bar .sep { width: 1px; height: 14px; margin: 0 5px 0 2px; background: #fff; }
.msg-bar button + button:not(.flt) { margin-left: 6px; }
.msg-list { flex: 1; margin-bottom: 1px; border: 1px solid; border-color: #666 #e6e6e6 #fff #666; background: #f7f7f7; }
```
